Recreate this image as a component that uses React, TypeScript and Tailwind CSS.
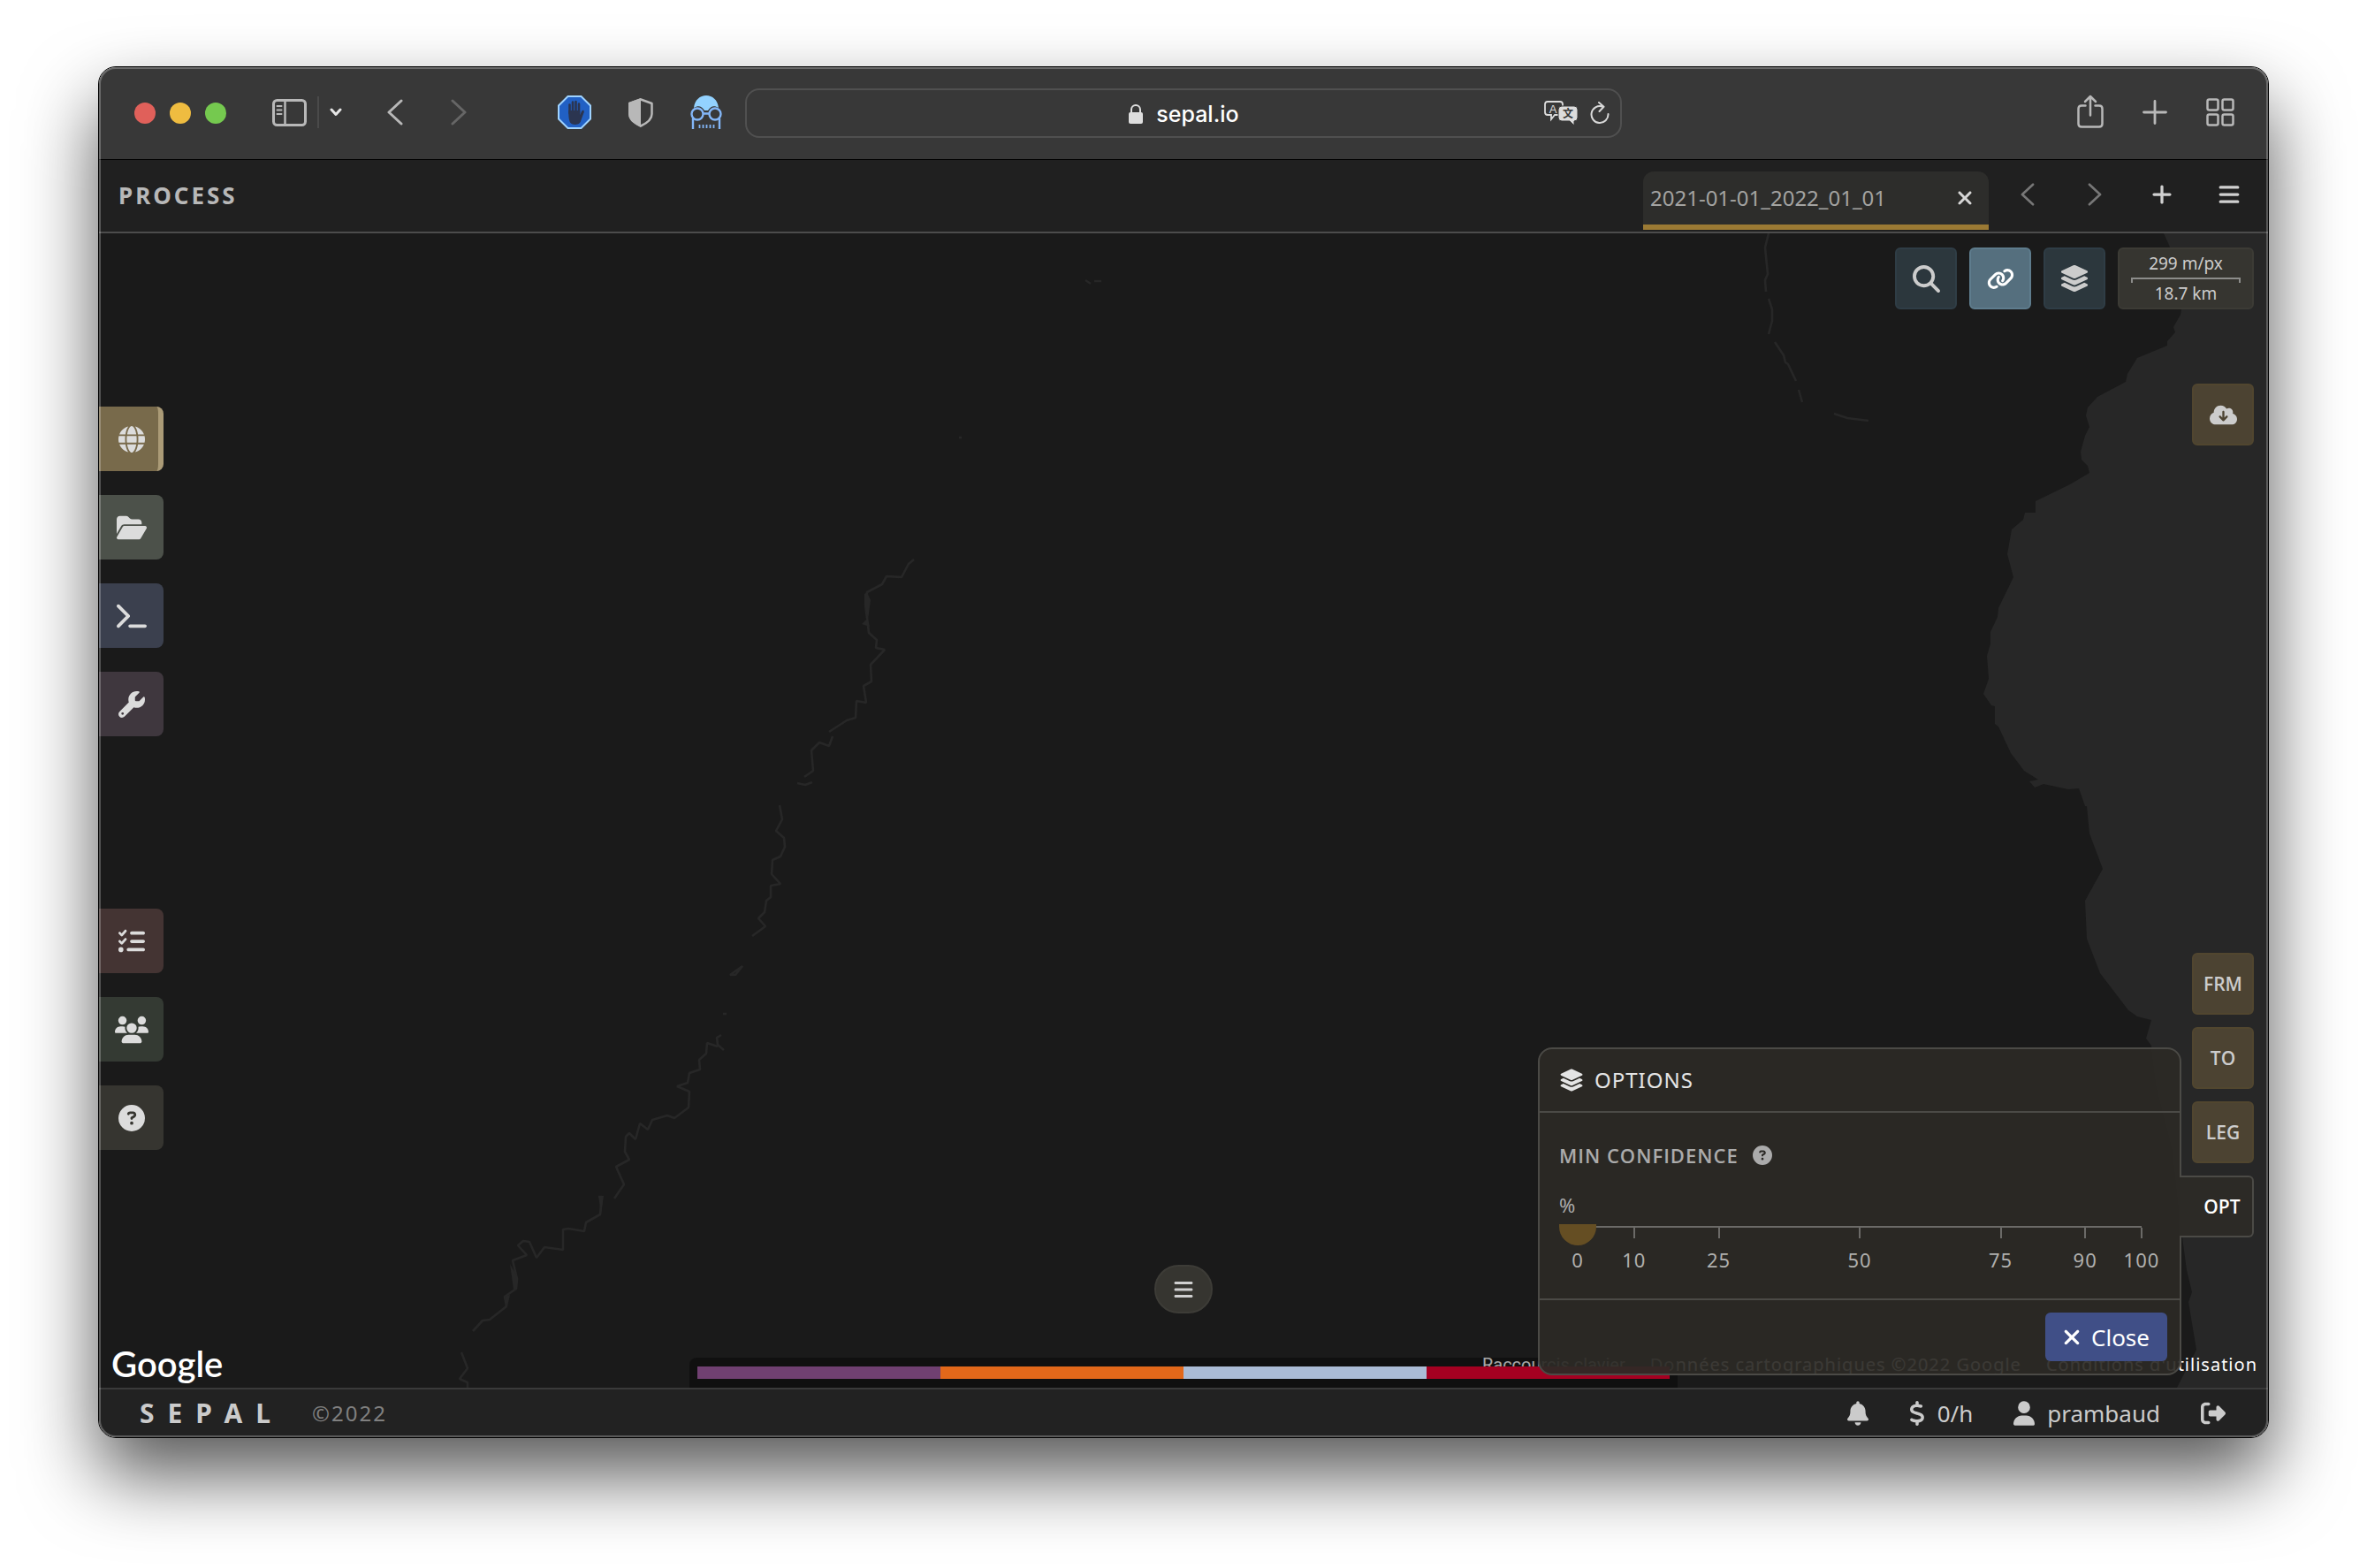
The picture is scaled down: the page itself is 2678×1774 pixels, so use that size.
import React, { useState } from "react";
import {
  FaBars,
  FaBell,
  FaCircleQuestion,
  FaCloudArrowDown,
  FaDollarSign,
  FaFolderOpen,
  FaGlobe,
  FaLayerGroup,
  FaLink,
  FaListCheck,
  FaMagnifyingGlass,
  FaPlus,
  FaRightFromBracket,
  FaTerminal,
  FaUser,
  FaUsers,
  FaWrench,
  FaXmark,
} from "react-icons/fa6";

const modules = [
  { label: "Process", icon: FaGlobe, size: "size-[30px]", color: "bg-[#786a4b] border-r-[6px] border-[#ab9b77] pl-1.5" },
  { label: "Files", icon: FaFolderOpen, size: "size-[34px]", color: "bg-[#4c514a]" },
  { label: "Terminal", icon: FaTerminal, size: "size-[34px]", color: "bg-[#3b404e]" },
  { label: "Apps", icon: FaWrench, size: "size-[30px]", color: "bg-[#3f373e]" },
];

const tools = [
  { label: "Tasks", icon: FaListCheck, size: "size-[30px]", color: "bg-[#443433]" },
  { label: "Users", icon: FaUsers, size: "size-[38px]", color: "bg-[#343a33]" },
  { label: "Help", icon: FaCircleQuestion, size: "size-[30px]", color: "bg-[#363530]" },
];

const ticks = [0, 10, 25, 50, 75, 90, 100];

const legend = ["bg-[#704071]", "bg-[#e2681a]", "bg-[#abbcd6]", "bg-[#a50021]"];

const coast =
  "M2448 264L2454 277L2466 320L2468 350L2467 356L2459 370L2461 376L2452 386L2452 391L2418 405L2407 423L2405 432L2373 449L2362 461L2360 470L2364 483L2359 493L2354 511L2355 520L2362 527L2364 535L2342 548L2303 567L2303 580L2291 580L2289 588L2276 599L2271 627L2278 653L2261 688L2260 698L2252 715L2252 728L2248 742L2250 768L2244 785L2253 798L2257 799L2257 819L2261 822L2275 852L2290 872L2306 882L2296 884L2302 891L2312 887L2340 893L2352 892L2359 912L2361 912L2364 943L2379 983L2359 1019L2361 1062L2376 1101L2408 1143L2418 1150L2434 1154L2428 1175L2434 1183L2440 1230L2458 1300L2469 1400L2474 1437L2480 1462L2476 1473L2481 1503L2485 1527L2463 1570H2566V264Z";

const rivers = [
  "M1034 633L1028 638L1020 653L1003 652L998 661L981 670L979 684L981 699L983 716L992 724L991 733L1001 735L985 752L986 771L977 776L980 795L969 793L968 812L958 815L938 828",
  "M942 833L938 844L927 840L918 849L920 872L910 879",
  "M902 886L911 888L919 885",
  "M882 911L885 927L878 940L887 948L888 958L883 969L874 973L873 989L883 1000L872 1002L872 1015L867 1019L865 1032L858 1039L866 1048L851 1059",
  "M840 1093L826 1103L832 1103Z",
  "M818 1147h4",
  "M816 1171L811 1174L812 1182L819 1188M812 1184L800 1180L799 1192L791 1199L792 1210L780 1214L778 1225L766 1229L780 1235L779 1253L763 1265L755 1262L738 1267L733 1278L724 1271L719 1289L712 1282L708 1286L707 1303L712 1312L697 1320L706 1340L695 1356",
  "M677 1354L681 1354L679 1374L663 1383L661 1393L643 1390L637 1391L637 1414L616 1411L607 1423L599 1405L592 1404L586 1409L596 1420L580 1426L585 1447L584 1458L571 1467L573 1478L554 1493L546 1494L535 1506",
  "M522 1530L529 1548L520 1560L529 1564L529 1570",
  "M2001 264L1997 280L2000 310L1997 317L1998 330",
  "M2001 338L2005 350L2005 363L2001 378",
  "M2008 387L2018 402L2020 410L2023 412L2032 431",
  "M2035 441L2039 455",
  "M2075 468L2090 473L2114 476",
  "M1228 317L1234 321M1238 318h8",
  "M1085 495h3",
];

function MapDrawing() {
  return (
    <svg
      className="absolute inset-0 h-full w-full"
      viewBox="112 264 2454 1306"
      preserveAspectRatio="xMaxYMid slice"
      aria-hidden="true"
    >
      <path d={coast} fill="#272727" />
      <g fill="none" stroke="#272727" strokeWidth="2.6" strokeLinejoin="bevel">
        {rivers.map((d) => (
          <path key={d} d={d} />
        ))}
      </g>
      <path
        fill="#272727"
        d="M978 672l3-2 4 9-3 22 2 8-9-3 7-7-4-14zM577 1430l8 14v14l-4 1zM677 1353h6l-3 20zM571 1467l6-2-3 13z"
      />
    </svg>
  );
}

function SidebarIcon() {
  return (
    <svg width="39" height="31" viewBox="0 0 39 31" fill="none" stroke="#b8b8b8" strokeWidth="3">
      <rect x="1.5" y="1.5" width="36" height="28" rx="4" />
      <path d="M14.5 2v27" strokeWidth="2.5" />
      <path d="M5.5 8h5M5.5 12.5h5M5.5 17h5" strokeWidth="2" strokeLinecap="round" />
    </svg>
  );
}

function Chevron({ dir, color, size }: { dir: "left" | "right"; color: string; size: "lg" | "sm" }) {
  const h = size === "lg" ? 30 : 26;
  return (
    <svg width="18" height={h} viewBox="0 0 18 30" fill="none" stroke={color} strokeWidth="3" strokeLinecap="round" strokeLinejoin="round">
      <path d={dir === "left" ? "M16 2L2 15l14 13" : "M2 2l14 13L2 28"} />
    </svg>
  );
}

function HandIcon() {
  return (
    <svg width="38" height="38" viewBox="0 0 38 38">
      <path d="M11.5 1h15L37 11.5v15L26.5 37h-15L1 26.5v-15z" fill="#2160c4" stroke="#9fd3ff" strokeWidth="2" />
      <g stroke="#2b3550" strokeWidth="2.6" strokeLinecap="round" fill="none">
        <path d="M13.5 20V10.5M17 19V7.5M20.5 19V7M24 20V9.5" />
        <path d="M25 25l3.5-7" />
      </g>
      <path d="M12.2 17h13v6l3-5 1.5 1-4 11c-1.5 4-10.5 4-12 0-1.2-3-1.5-7-1.5-13z" fill="#2b3550" />
    </svg>
  );
}

function ShieldIcon() {
  return (
    <svg width="28" height="33" viewBox="0 0 28 33">
      <path d="M14 1.5L26.5 6v12c0 6.5-6 10.5-12.5 13.5C7.5 28.5 1.5 24.5 1.5 18V6z" fill="none" stroke="#b8b8b8" strokeWidth="2.5" strokeLinejoin="round" />
      <path d="M14 0v33C6 29 0 25 0 18V5z" fill="#b8b8b8" />
    </svg>
  );
}

function GogglesIcon() {
  return (
    <svg width="36" height="38" viewBox="0 0 36 38" fill="none" stroke="#83b6f7" strokeWidth="2.4">
      <path d="M4 14C5 5 11 0 18 0s13 5 14 14c-5-3-9-2-12 3h-4C13 12 9 11 4 14z" fill="#93d2ff" stroke="none" />
      <circle cx="8" cy="21" r="6.5" />
      <circle cx="28" cy="21" r="6.5" />
      <path d="M14.5 20.5h7M3 26v12M33 26v12" />
      <path d="M10.5 33v4M14.5 33v4M18.5 33v4M22.5 33v4M26.5 33v4" strokeWidth="1.8" />
    </svg>
  );
}

function TranslateIcon() {
  return (
    <svg width="38" height="28" viewBox="0 0 38 28">
      <path d="M4 1h14q3 0 3 3v9q0 3-3 3h-6l-4 5v-5H4q-3 0-3-3V4q0-3 3-3z" fill="none" stroke="#dcdcdc" strokeWidth="1.8" />
      <text x="10" y="13.5" fontSize="13" textAnchor="middle" fill="#dcdcdc" fontFamily="Liberation Sans, sans-serif">A</text>
      <path d="M20 6h14q4 0 4 4v9q0 4-4 4v5l-5-5h-9q-4 0-4-4v-9q0-4 4-4z" fill="#dcdcdc" stroke="#383838" strokeWidth="1" />
      <text x="27" y="19" fontSize="12" fontWeight="700" textAnchor="middle" fill="#383838" fontFamily="Noto Sans CJK SC, sans-serif">文</text>
    </svg>
  );
}

function ReloadIcon() {
  return (
    <svg width="22" height="26" viewBox="0 0 22 26" fill="none" stroke="#d8d8d8" strokeWidth="2" strokeLinecap="round" strokeLinejoin="round">
      <path d="M14 5.5A9.5 9.5 0 1 0 20.5 14M10 1l5.5 4.8L10.5 11" />
    </svg>
  );
}

function BrowserBar() {
  return (
    <header className="grid h-[105px] shrink-0 grid-cols-[1fr_minmax(0,992px)_1fr] items-center border-b border-black bg-[#383838]">
      <div className="flex items-center pl-10">
        <div className="flex gap-4">
          <span className="size-6 rounded-full bg-[#e0605a]" />
          <span className="size-6 rounded-full bg-[#efbc40]" />
          <span className="size-6 rounded-full bg-[#75c94f]" />
        </div>
        <div className="flex items-center pb-0.5">
          <button aria-label="Sidebar" className="ml-[52px]">
            <SidebarIcon />
          </button>
          <span className="ml-3 h-9 w-0.5 bg-[#4a4a4a]" />
          <button aria-label="Tab groups" className="ml-3">
            <svg width="14" height="10" viewBox="0 0 14 10" fill="none" stroke="#e6e6e6" strokeWidth="3" strokeLinecap="round" strokeLinejoin="round">
              <path d="M2 2l5 5.5L12 2" />
            </svg>
          </button>
          <button aria-label="Back" className="ml-[51px]">
            <Chevron dir="left" color="#b8b8b8" size="lg" />
          </button>
          <button aria-label="Forward" className="ml-[54px]">
            <Chevron dir="right" color="#666666" size="lg" />
          </button>
          <div className="ml-[103px] flex items-center gap-[42px]">
            <HandIcon />
            <ShieldIcon />
            <GogglesIcon />
          </div>
        </div>
      </div>
      <div className="grid h-14 grid-cols-[1fr_auto_1fr] items-center rounded-2xl border-2 border-[#505050] px-3">
        <div className="col-start-2 flex items-center gap-3.5 pt-0.5">
          <svg width="18" height="24" viewBox="0 0 18 24">
            <path d="M4 12V7a5 5 0 0 1 10 0v5" fill="none" stroke="#dedede" strokeWidth="2" />
            <rect x="1" y="10" width="16" height="13" rx="2" fill="#dedede" />
          </svg>
          <span className="font-[Inter] text-[25px] leading-8 font-medium text-white">sepal.io</span>
        </div>
        <div className="flex items-center justify-end gap-3.5">
          <TranslateIcon />
          <ReloadIcon />
        </div>
      </div>
      <div className="flex items-center justify-end gap-11 pr-[38px] pb-0.5">
        <button aria-label="Share" className="pb-0.5">
          <svg width="30" height="38" viewBox="0 0 30 38" fill="none" stroke="#b8b8b8" strokeWidth="2.5" strokeLinecap="round" strokeLinejoin="round">
            <path d="M9.5 12.5H5q-3.5 0-3.5 3.5v17q0 3.5 3.5 3.5h20q3.5 0 3.5-3.5V16q0-3.5-3.5-3.5h-4.5M15 23.5V2M9 8l6-6 6 6" />
          </svg>
        </button>
        <button aria-label="New tab">
          <svg width="28" height="28" viewBox="0 0 28 28" stroke="#b8b8b8" strokeWidth="2.8" strokeLinecap="round">
            <path d="M14 1.5v25M1.5 14h25" />
          </svg>
        </button>
        <button aria-label="Tab overview">
          <svg width="32" height="32" viewBox="0 0 32 32" fill="none" stroke="#b8b8b8" strokeWidth="2.5">
            <rect x="1.5" y="1.5" width="12" height="12" rx="2" />
            <rect x="18.5" y="1.5" width="12" height="12" rx="2" />
            <rect x="1.5" y="18.5" width="12" height="12" rx="2" />
            <rect x="18.5" y="18.5" width="12" height="12" rx="2" />
          </svg>
        </button>
      </div>
    </header>
  );
}

function TabBar() {
  const button = "flex h-14 w-19 items-center justify-center text-[#d0d0d0]";
  return (
    <div className="flex h-[83px] shrink-0 items-end justify-between border-b-2 border-[#4c4c4c] bg-[#202020] pr-1.5 pb-0.5 pl-[22px]">
      <h1 className="self-center text-[26px] leading-8 font-bold tracking-[3px] text-[#b8b8b8]">PROCESS</h1>
      <div className="flex items-end">
        <div className="flex h-[66px] w-[391px] items-center justify-between rounded-t-xl border-b-6 border-[#9b7a34] bg-[#2d2d2b] pr-[18px] pl-2">
          <span className="text-[24px] leading-8 text-[#a3a3a1]">2021-01-01_2022_01_01</span>
          <button aria-label="Close tab" className="text-[#d6d6d6]">
            <FaXmark className="h-6 w-[18px]" />
          </button>
        </div>
        <div className="mb-3 ml-1.5 flex">
          <button aria-label="Previous tab" className={button}>
            <Chevron dir="left" color="#777777" size="sm" />
          </button>
          <button aria-label="Next tab" className={button}>
            <Chevron dir="right" color="#777777" size="sm" />
          </button>
          <button aria-label="Add tab" className={button}>
            <FaPlus className="size-[26px]" />
          </button>
          <button aria-label="Menu" className={button}>
            <FaBars className="size-[26px]" />
          </button>
        </div>
      </div>
    </div>
  );
}

type ModuleProps = { label: string; icon: React.ElementType; size: string; color: string };

function ModuleButton({ label, icon: Icon, size, color }: ModuleProps) {
  return (
    <button aria-label={label} className={`flex size-[73px] items-center justify-center rounded-r-lg text-[#dcdcdc] ${color}`}>
      <Icon className={size} />
    </button>
  );
}

function OptionsPanel({ onClose }: { onClose: () => void }) {
  const [confidence, setConfidence] = useState(0);

  return (
    <section className="-mr-0.5 w-[728px] rounded-2xl border-2 border-[#4b4a46] bg-[#2c2a26]/93">
      <h2 className="flex h-[72px] items-center gap-3 border-b-2 border-[#4b4a46] px-[22px] text-[24px] leading-8 tracking-[1px] text-[#e4e4e4]">
        <FaLayerGroup className="size-7" />
        OPTIONS
      </h2>
      <div className="h-[212px] border-b-2 border-[#4b4a46] px-[22px] pt-8">
        <div className="flex items-center gap-4 text-[#ababab]">
          <label htmlFor="confidence" className="font-['Open_Sans'] text-[22px] leading-8 font-semibold tracking-[1px]">
            MIN CONFIDENCE
          </label>
          <FaCircleQuestion className="size-[22px]" />
        </div>
        <div className="pt-6 text-[22px] leading-8 text-[#ababab]">%</div>
        <div className="relative mt-1.5">
          <div className="absolute inset-x-[21px] top-0.5 border-t-2 border-[#6b6a67]">
            {ticks.map((t) => (
              <span key={t} className="absolute h-3 w-0.5 -translate-x-1/2 bg-[#6b6a67]" style={{ left: `${t}%` }} />
            ))}
          </div>
          <input
            id="confidence"
            type="range"
            min={0}
            max={100}
            value={confidence}
            onChange={(e) => setConfidence(Number(e.target.value))}
            className="relative block h-6 w-full appearance-none bg-transparent [&::-webkit-slider-thumb]:h-6 [&::-webkit-slider-thumb]:w-[42px] [&::-webkit-slider-thumb]:appearance-none [&::-webkit-slider-thumb]:rounded-b-full [&::-webkit-slider-thumb]:bg-[#654e23]"
          />
          <div className="relative mx-[21px] h-8">
            {ticks.map((t) => (
              <span
                key={t}
                className="absolute top-0 -translate-x-1/2 text-[22px] leading-8 tracking-[1px] text-[#b0b0ae]"
                style={{ left: `${t}%` }}
              >
                {t}
              </span>
            ))}
          </div>
        </div>
      </div>
      <div className="flex justify-end px-3.5 py-3.5">
        <button onClick={onClose} className="flex h-[55px] items-center gap-3 rounded-md bg-[#404f87] px-5 text-[26px] leading-8 text-white">
          <FaXmark className="h-7 w-5" />
          Close
        </button>
      </div>
    </section>
  );
}

function MapArea() {
  const [open, setOpen] = useState(true);
  const square = "flex size-[70px] items-center justify-center rounded-md border-2";
  const blue = "border-[#2f3d46] bg-[#2c373d] text-[#cccccc]";
  const brown = "border-[#51462f] bg-[#4c4332] font-['Open_Sans'] text-[21px] leading-6 font-semibold text-[#cccccc]";

  return (
    <main className="relative flex flex-1 justify-between overflow-hidden bg-[#1a1a1a]">
      <MapDrawing />

      <div className="absolute bottom-1.5 left-3.5 text-white">
        <span className="font-[Lato] text-[40px] leading-10 font-semibold">Google</span>
      </div>
      <div className="absolute right-3 bottom-2.5 flex gap-7 text-[20px] leading-8 text-white">
        <a href="#shortcuts" className="font-[Roboto]">Raccourcis clavier</a>
        <span className="tracking-[1px]">Données cartographiques ©2022 Google</span>
        <a href="#terms" className="tracking-[1px]">Conditions d'utilisation</a>
      </div>
      <div className="absolute bottom-0 left-1/2 flex w-[1118px] -translate-x-1/2 flex-col items-center gap-[50px]">
        <button aria-label="Legend" className="flex h-[55px] w-[66px] items-center justify-center rounded-full border-2 border-[#3d3c37] bg-[#363530] text-[#d0d0d0]">
          <FaBars className="size-6" />
        </button>
        <div className="flex h-[34px] w-full items-center rounded-t-lg bg-black/35 px-[9px]">
          {legend.map((c) => (
            <span key={c} className={`h-3.5 flex-1 ${c}`} />
          ))}
        </div>
      </div>

      <nav className="relative flex flex-col justify-between pt-[196px] pb-[269px]">
        <div className="flex flex-col gap-[27px]">
          {modules.map((m) => (
            <ModuleButton key={m.label} {...m} />
          ))}
        </div>
        <div className="flex flex-col gap-[27px]">
          {tools.map((m) => (
            <ModuleButton key={m.label} {...m} />
          ))}
        </div>
      </nav>

      <div className="relative flex flex-col items-end justify-between pt-4 pr-4 pb-3.5">
        <div className="flex flex-col items-end gap-[84px]">
          <div className="flex gap-3.5">
            <button aria-label="Search" className={`${square} ${blue}`}>
              <FaMagnifyingGlass className="size-[31px]" />
            </button>
            <button aria-label="Link maps" className={`${square} border-[#5e7c8d] bg-[#556f7e] text-white`}>
              <FaLink className="size-[31px]" />
            </button>
            <button aria-label="Layers" className={`${square} ${blue}`}>
              <FaLayerGroup className="size-[34px]" />
            </button>
            <div className="flex h-[70px] w-[154px] flex-col items-center justify-center rounded-md border-2 border-[#3c3b35] bg-[#363530] text-[19px] leading-6 text-[#cccccc]">
              <span>299 m/px</span>
              <span className="mt-1 h-1.5 w-[124px] border-2 border-b-0 border-[#8c8c8a]" />
              <span>18.7 km</span>
            </div>
          </div>
          <button aria-label="Retrieve" className={`${square} ${brown}`}>
            <FaCloudArrowDown className="size-[31px]" />
          </button>
        </div>

        <div className="flex items-end">
          {open && <OptionsPanel onClose={() => setOpen(false)} />}
          <div className="relative flex flex-col items-end gap-3.5 pb-[156px]">
            <button className={`${square} ${brown}`}>FRM</button>
            <button className={`${square} ${brown}`}>TO</button>
            <button className={`${square} ${brown}`}>LEG</button>
            <button
              onClick={() => setOpen(true)}
              className="flex h-[70px] w-[84px] items-center justify-center rounded-r-md border-2 border-l-0 border-[#4b4a46] bg-[#2c2a26] pl-3.5 font-['Open_Sans'] text-[21px] leading-6 font-semibold text-white"
            >
              OPT
            </button>
          </div>
        </div>
      </div>
    </main>
  );
}

function Footer() {
  return (
    <footer className="flex h-14 shrink-0 items-center justify-between border-t-2 border-[#3a3a3a] bg-[#222222] pr-12 pl-[46px] text-[26px] leading-8 text-[#cbcbcb]">
      <div className="flex items-center gap-8">
        <span className="text-[30px] font-bold tracking-[15px]">SEPAL</span>
        <span className="text-[24px] tracking-[2px] text-[#808080]">©2022</span>
      </div>
      <div className="flex items-center gap-[46px]">
        <button aria-label="Notifications">
          <FaBell className="h-7 w-6" />
        </button>
        <button className="flex items-center gap-3.5">
          <FaDollarSign className="h-7 w-[18px]" />
          0/h
        </button>
        <button className="flex items-center gap-3.5">
          <FaUser className="h-7 w-6" />
          prambaud
        </button>
        <button aria-label="Log out">
          <FaRightFromBracket className="size-7" />
        </button>
      </div>
    </footer>
  );
}

export default function App() {
  return (
    <div className="flex min-h-screen flex-col bg-white px-[111px] pt-[75px] pb-[147px] font-['Noto_Sans',sans-serif]">
      <div className="relative flex flex-1 flex-col overflow-hidden rounded-[20px] border border-black shadow-[0_42px_84px_rgba(0,0,0,0.66)]">
        <BrowserBar />
        <TabBar />
        <MapArea />
        <Footer />
        <div className="pointer-events-none absolute inset-0 rounded-[19px] border-2 border-white/25" />
      </div>
    </div>
  );
}
